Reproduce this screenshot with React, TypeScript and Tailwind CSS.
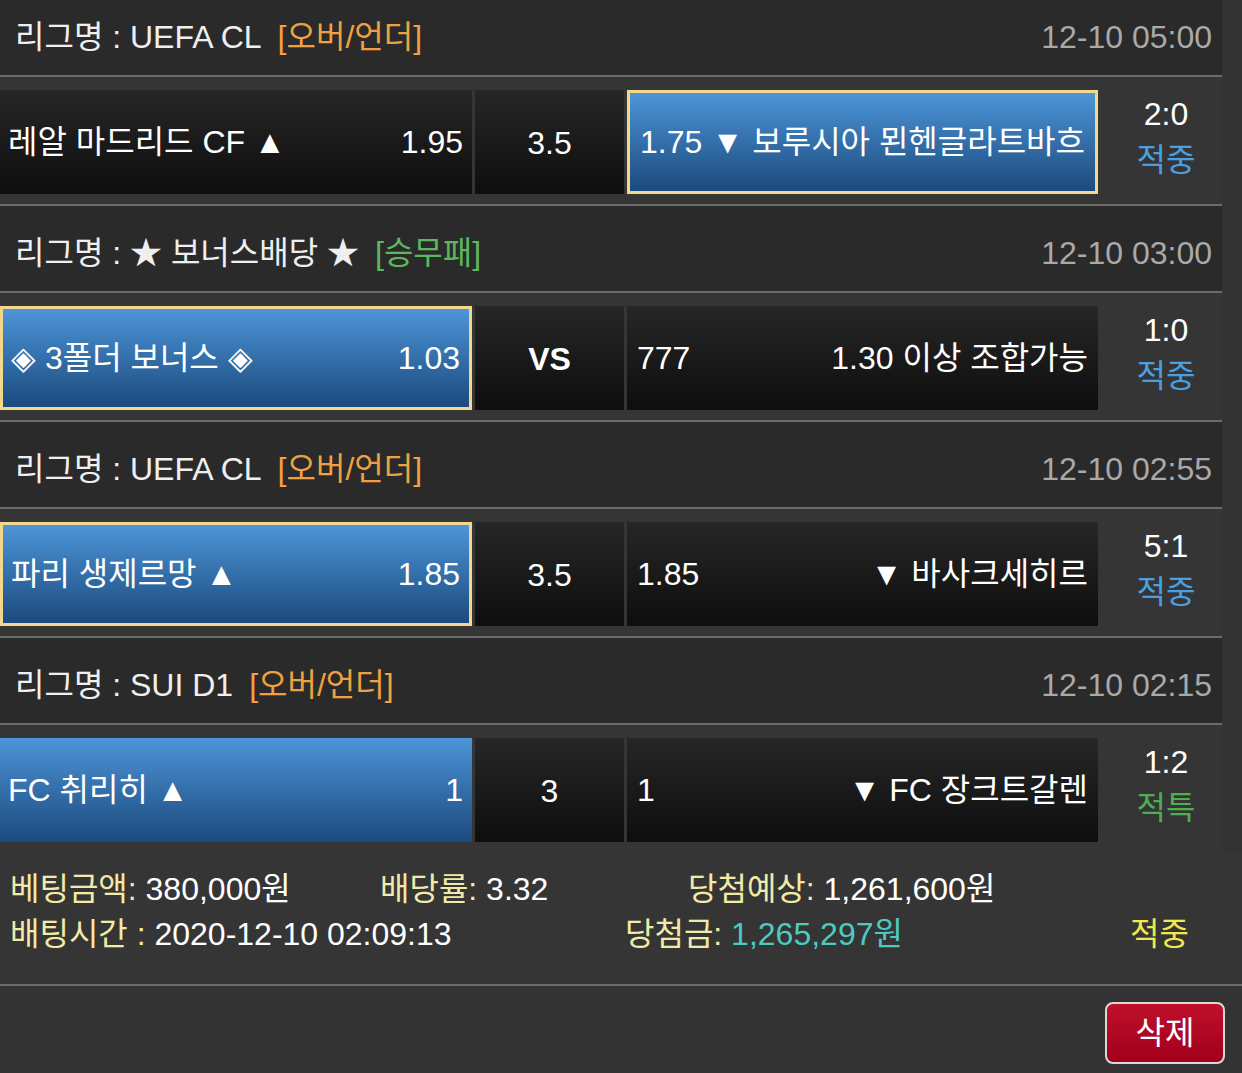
import { FC } from 'react';

type Side = { name: string; odds: string; selected?: boolean; border?: boolean };

interface Bet {
  league: string;
  tag: string;
  tagColor: string;
  time: string;
  home: Side;
  middle: string;
  middleBold?: boolean;
  away: Side;
  score: string;
  result: string;
  resultColor: string;
  first?: boolean;
  last?: boolean;
}

const bets: Bet[] = [
  {
    league: '리그명 : UEFA CL',
    tag: '[오버/언더]',
    tagColor: 'text-[#f0a040]',
    time: '12-10 05:00',
    home: { name: '레알 마드리드 CF ▲', odds: '1.95' },
    middle: '3.5',
    away: { name: '▼ 보루시아 묀헨글라트바흐', odds: '1.75', selected: true, border: true },
    score: '2:0',
    result: '적중',
    resultColor: 'text-[#4a9fe0]',
    first: true,
  },
  {
    league: '리그명 : ★ 보너스배당 ★',
    tag: '[승무패]',
    tagColor: 'text-[#5cb85c]',
    time: '12-10 03:00',
    home: { name: '◈ 3폴더 보너스 ◈', odds: '1.03', selected: true, border: true },
    middle: 'VS',
    middleBold: true,
    away: { name: '1.30 이상 조합가능', odds: '777' },
    score: '1:0',
    result: '적중',
    resultColor: 'text-[#4a9fe0]',
  },
  {
    league: '리그명 : UEFA CL',
    tag: '[오버/언더]',
    tagColor: 'text-[#f0a040]',
    time: '12-10 02:55',
    home: { name: '파리 생제르망 ▲', odds: '1.85', selected: true, border: true },
    middle: '3.5',
    away: { name: '▼ 바사크세히르', odds: '1.85' },
    score: '5:1',
    result: '적중',
    resultColor: 'text-[#4a9fe0]',
  },
  {
    league: '리그명 : SUI D1',
    tag: '[오버/언더]',
    tagColor: 'text-[#f0a040]',
    time: '12-10 02:15',
    home: { name: 'FC 취리히 ▲', odds: '1', selected: true },
    middle: '3',
    away: { name: '▼ FC 장크트갈렌', odds: '1' },
    score: '1:2',
    result: '적특',
    resultColor: 'text-[#4caf50]',
    last: true,
  },
];

const cellBg = (side?: Side) =>
  side?.selected
    ? side.border
      ? 'bg-gradient-to-b from-[#4d95d8] to-[#1c4b7e] border-[3px] border-[#f3d78c]'
      : 'bg-gradient-to-b from-[#4d95d8] to-[#1c4b7e]'
    : 'bg-gradient-to-b from-[#272727] to-[#0e0e0e]';

const Separator: FC = () => <div className="h-[2px] bg-[#6c6c6c]" />;

const BetBlock: FC<{ bet: Bet }> = ({ bet }) => {
  return (
    <>
      <div
        className={`flex items-center justify-between bg-[#2a2a2a] pl-[15px] pr-[10px] ${
          bet.first ? 'h-[75px]' : 'h-[85px] pt-[10px]'
        }`}
      >
        <div className="flex items-center text-[#efefef]">
          <span>{bet.league}</span>
          <span className={`ml-[16px] ${bet.tagColor}`}>{bet.tag}</span>
        </div>
        <div className="text-[#a9a9a9]">{bet.time}</div>
      </div>
      <Separator />
      <div className="flex items-center bg-[#353535] pt-[13px] pb-[10px]">
        <div
          className={`flex h-[104px] w-[472px] items-center justify-between pl-[8px] pr-[9px] text-white ${cellBg(
            bet.home,
          )}`}
        >
          <span>{bet.home.name}</span>
          <span>{bet.home.odds}</span>
        </div>
        <div
          className={`ml-[3px] flex h-[104px] w-[149px] items-center justify-center pt-[3px] text-white ${cellBg()} ${
            bet.middleBold ? 'font-bold' : ''
          }`}
        >
          {bet.middle}
        </div>
        <div
          className={`ml-[3px] flex h-[104px] w-[471px] items-center justify-between pl-[10px] pr-[10px] text-white ${cellBg(
            bet.away,
          )}`}
        >
          <span>{bet.away.odds}</span>
          <span>{bet.away.name}</span>
        </div>
        <div className="-mt-[10px] flex w-[124px] flex-col items-center pl-[12px] leading-[46px]">
          <span className="text-white">{bet.score}</span>
          <span className={bet.resultColor}>{bet.result}</span>
        </div>
      </div>
      {bet.last ? null : <Separator />}
    </>
  );
};

const App: FC = () => {
  return (
    <div className="min-h-[1073px] w-[1242px] bg-[#333333] font-['Liberation_Sans','Noto_Sans_CJK_KR',sans-serif] text-[32px] leading-[45px]">
      <div className="w-[1222px]">
        {bets.map((bet, i) => (
          <BetBlock key={i} bet={bet} />
        ))}
      </div>
      <div className="bg-[#353535] pt-[15px] pb-[27px] pl-[10px]">
        <div className="flex">
          <div className="w-[370px]">
            <span className="text-[#f2eaa8]">베팅금액:</span>
            <span className="text-white"> 380,000원</span>
          </div>
          <div className="w-[308px]">
            <span className="text-[#f2eaa8]">배당률:</span>
            <span className="text-white"> 3.32</span>
          </div>
          <div>
            <span className="text-[#f2eaa8]">당첨예상:</span>
            <span className="text-white"> 1,261,600원</span>
          </div>
        </div>
        <div className="flex">
          <div className="w-[615px]">
            <span className="text-[#f2eaa8]">배팅시간 :</span>
            <span className="text-white"> 2020-12-10 02:09:13</span>
          </div>
          <div className="w-[505px]">
            <span className="text-[#f2eaa8]">당첨금:</span>
            <span className="text-[#4ecbc0]"> 1,265,297원</span>
          </div>
          <div className="text-[#f2e84a]">적중</div>
        </div>
      </div>
      <Separator />
      <div className="flex justify-end pt-[16px] pr-[17px]">
        <button className="flex h-[62px] w-[120px] items-center justify-center rounded-[8px] border-2 border-[#d8d8d8] bg-gradient-to-b from-[#c0102a] to-[#a0001c] text-white">
          삭제
        </button>
      </div>
    </div>
  );
};

export default App;
